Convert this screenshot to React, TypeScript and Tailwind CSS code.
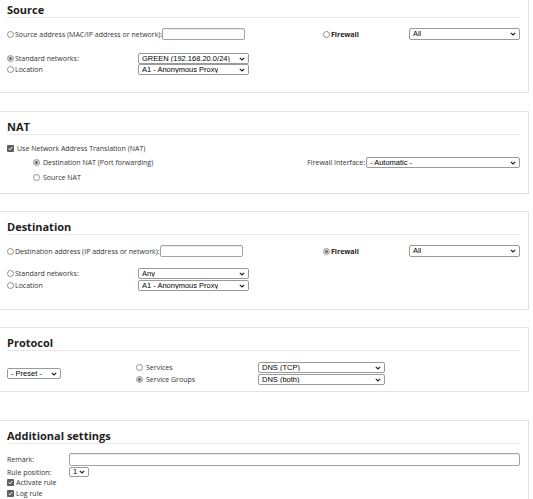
import React from "react";

function Radio({ on = false }: { on?: boolean }) {
  return (
    <span
      className={
        on
          ? "flex h-[7px] w-[7px] shrink-0 items-center justify-center rounded-full border border-[#9b9b9b] bg-[#d9d9d9]"
          : "flex h-[7px] w-[7px] shrink-0 items-center justify-center rounded-full border border-[#8f8f8f] bg-white"
      }
    >
      {on && <span className="h-[3px] w-[3px] rounded-full bg-[#6e6e6e]" />}
    </span>
  );
}

function Check() {
  return (
    <span className="flex h-[7px] w-[7px] shrink-0 items-center justify-center rounded-[1px] bg-[#5f5f5f]">
      <svg width="5" height="5" viewBox="0 0 5 5">
        <path d="M0.7 2.6 L2 3.8 L4.3 1" stroke="#fff" strokeWidth="1" fill="none" />
      </svg>
    </span>
  );
}

function Select({ value, className = "" }: { value: string; className?: string }) {
  return (
    <div
      className={`flex items-center justify-between gap-[2px] rounded-[2px] border border-[#9a9a9a] bg-white px-[3px] font-['Liberation_Sans',Arial,sans-serif] text-[7.5px] leading-none text-black ${className}`}
    >
      <span className="truncate">{value}</span>
      <svg width="6" height="4" viewBox="0 0 6 4" className="shrink-0">
        <path d="M0.8 0.8 L3 3 L5.2 0.8" stroke="#222" strokeWidth="1.2" fill="none" />
      </svg>
    </div>
  );
}

function Input({ className = "" }: { className?: string }) {
  return <div className={`rounded-[2px] border border-[#a3a3a3] bg-white shadow-[inset_0_1px_1px_rgba(0,0,0,0.08)] ${className}`} />;
}

function Panel({
  title,
  className = "",
  children,
}: {
  title: string;
  className?: string;
  children: React.ReactNode;
}) {
  return (
    <section className={`border-y border-r border-[#e3e3e3] bg-white pl-[7px] pr-[8px] pt-[8px] ${className}`}>
      <h2 className="border-b border-[#e8e8e8] text-[11px] font-bold leading-[14px] text-[#1e1e1e]">{title}</h2>
      {children}
    </section>
  );
}

export default function App() {
  return (
    <div className="min-h-[499px] overflow-hidden bg-white pr-[4px] font-['Open_Sans',sans-serif] text-[7px] leading-none text-[#333]">
      {/* Source */}
      <Panel title="Source" className="-mt-[6px] mb-[18px]">
        <div className="pb-[17px] pt-[10px]">
          <div className="grid h-[12px] grid-cols-[316px_86px_111px] items-center">
            <div className="flex items-center">
              <Radio />
              <span className="ml-[1px]">Source address (MAC/IP address or network):</span>
              <Input className="h-[12px] w-[83px]" />
            </div>
            <div className="flex items-center">
              <Radio />
              <span className="ml-[1px] font-bold text-[#222]">Firewall</span>
            </div>
            <Select value="All" className="h-[12px]" />
          </div>
          <div className="mt-[13px] grid grid-cols-[131px_111px] items-center">
            <div className="flex items-center">
              <Radio on />
              <span className="ml-[1px]">Standard networks:</span>
            </div>
            <Select value="GREEN (192.168.20.0/24)" className="h-[11px]" />
            <div className="flex items-center">
              <Radio />
              <span className="ml-[1px]">Location</span>
            </div>
            <Select value="A1 - Anonymous Proxy" className="h-[11px]" />
          </div>
        </div>
      </Panel>

      {/* NAT */}
      <Panel title="NAT" className="mb-[17px]">
        <div className="pb-[11px] pt-[9px]">
          <div className="flex h-[9px] items-center">
            <Check />
            <span className="ml-[3px]">Use Network Address Translation (NAT)</span>
          </div>
          <div className="mt-[4px] flex h-[11px] items-center">
            <div className="flex items-center pl-[26px]">
              <Radio on />
              <span className="ml-[3px]">Destination NAT (Port forwarding)</span>
            </div>
            <div className="ml-auto flex items-center">
              <span className="mr-[1px]">Firewall Interface:</span>
              <Select value="- Automatic -" className="h-[11px] w-[154px]" />
            </div>
          </div>
          <div className="mt-[5px] flex h-[9px] items-center pl-[26px]">
            <Radio />
            <span className="ml-[3px]">Source NAT</span>
          </div>
        </div>
      </Panel>

      {/* Destination */}
      <Panel title="Destination" className="mb-[17px]">
        <div className="pb-[18px] pt-[10px]">
          <div className="grid h-[12px] grid-cols-[316px_86px_111px] items-center">
            <div className="flex items-center">
              <Radio />
              <span className="ml-[1px]">Destination address (IP address or network):</span>
              <Input className="h-[12px] w-[83px]" />
            </div>
            <div className="flex items-center">
              <Radio on />
              <span className="ml-[1px] font-bold text-[#222]">Firewall</span>
            </div>
            <Select value="All" className="h-[12px]" />
          </div>
          <div className="mt-[11px] grid grid-cols-[131px_111px] items-center gap-y-[1px]">
            <div className="flex items-center">
              <Radio />
              <span className="ml-[1px]">Standard networks:</span>
            </div>
            <Select value="Any" className="h-[11px]" />
            <div className="flex items-center">
              <Radio />
              <span className="ml-[1px]">Location</span>
            </div>
            <Select value="A1 - Anonymous Proxy" className="h-[11px]" />
          </div>
        </div>
      </Panel>

      {/* Protocol */}
      <Panel title="Protocol" className="mb-[28px]">
        <div className="grid grid-cols-[129px_122px_127px] items-center pb-[6px] pt-[11px]">
          <Select value="- Preset -" className="h-[11px] w-[54px]" />
          <div className="flex flex-col gap-[1px]">
            <div className="flex h-[11px] items-center">
              <Radio />
              <span className="ml-[3px]">Services</span>
            </div>
            <div className="flex h-[11px] items-center">
              <Radio on />
              <span className="ml-[3px]">Service Groups</span>
            </div>
          </div>
          <div className="flex flex-col gap-[1px]">
            <Select value="DNS (TCP)" className="h-[11px]" />
            <Select value="DNS (both)" className="h-[11px]" />
          </div>
        </div>
      </Panel>

      {/* Additional settings */}
      <Panel title="Additional settings">
        <div className="pb-[10px] pt-[9px]">
          <div className="grid grid-cols-[62px_1fr] items-center gap-y-[1px]">
            <span>Remark:</span>
            <Input className="h-[13px] w-[451px]" />
            <span>Rule position:</span>
            <Select value="1" className="h-[10px] w-[20px]" />
          </div>
          <div className="mt-[1px] flex h-[9px] items-center">
            <Check />
            <span className="ml-[2px]">Activate rule</span>
          </div>
          <div className="mt-[2px] flex h-[9px] items-center">
            <Check />
            <span className="ml-[2px]">Log rule</span>
          </div>
        </div>
      </Panel>
    </div>
  );
}
